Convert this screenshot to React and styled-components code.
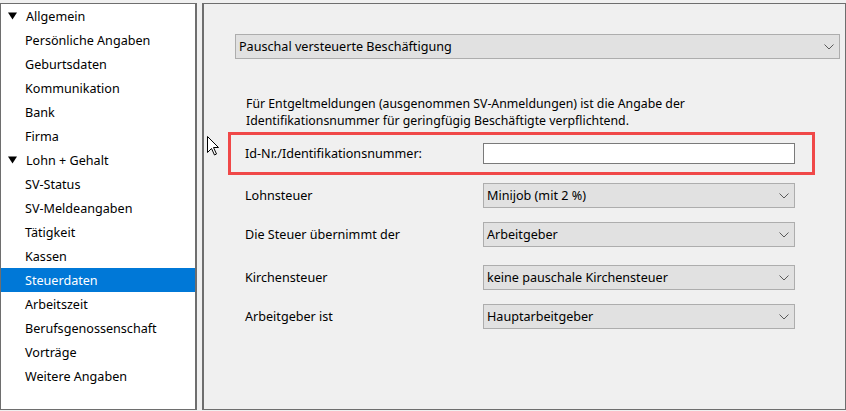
import React from "react";
import styled, { createGlobalStyle } from "styled-components";

const GlobalStyle = createGlobalStyle`
  html, body {
    margin: 0;
    padding: 0;
    background: #f0f0f0;
  }
  body {
    font-family: "Noto Sans", "Open Sans", sans-serif;
    font-size: 12.6px;
    color: #000;
  }
`;

const navItems = [
  { label: "Allgemein", group: true },
  { label: "Persönliche Angaben" },
  { label: "Geburtsdaten" },
  { label: "Kommunikation" },
  { label: "Bank" },
  { label: "Firma" },
  { label: "Lohn + Gehalt", group: true },
  { label: "SV-Status" },
  { label: "SV-Meldeangaben" },
  { label: "Tätigkeit" },
  { label: "Kassen" },
  { label: "Steuerdaten", active: true },
  { label: "Arbeitszeit" },
  { label: "Berufsgenossenschaft" },
  { label: "Vorträge" },
  { label: "Weitere Angaben" },
];

const rows = [
  { label: "Lohnsteuer", value: "Minijob (mit 2 %)", gap: 8 },
  { label: "Die Steuer übernimmt der", value: "Arbeitgeber", gap: 14 },
  { label: "Kirchensteuer", value: "keine pauschale Kirchensteuer", gap: 18 },
  { label: "Arbeitgeber ist", value: "Hauptarbeitgeber", gap: 14 },
];

const Window = styled.div`
  position: relative;
  display: flex;
  gap: 5px;
  width: 846px;
  height: 411px;
  padding-top: 3px;
  box-sizing: border-box;
`;

const Sidebar = styled.ul`
  list-style: none;
  margin: 0;
  padding: 0;
  width: 197px;
  height: 407px;
  box-sizing: border-box;
  background: #fff;
  border: 1px solid #6e6e6e;
  border-right-width: 2px;
`;

const NavItem = styled.li`
  display: flex;
  align-items: center;
  height: 24px;
  padding-left: ${(p) => (p.$group ? "7px" : "24px")};
  gap: 9px;
  background: ${(p) => (p.$active ? "#0078d7" : "transparent")};
  color: ${(p) => (p.$active ? "#fff" : "#000")};
  white-space: nowrap;
`;

const Content = styled.div`
  flex: 1;
  height: 407px;
  box-sizing: border-box;
  border: 1px solid #6e6e6e;
  border-left-width: 2px;
  padding: 30px 5px 0 31px;
`;

const Select = styled.div`
  display: flex;
  align-items: center;
  justify-content: space-between;
  width: ${(p) => p.$width || "auto"};
  height: 25px;
  box-sizing: border-box;
  padding: 0 5px 0 3px;
  background: #e1e1e1;
  border: 1px solid #adadad;
  white-space: nowrap;
`;

const Hint = styled.p`
  margin: 36px 0 3px 11px;
  line-height: 17px;
  font-size: 12.3px;
  white-space: nowrap;
`;

const Field = styled.div`
  display: flex;
  align-items: center;
  width: 587px;
  height: ${(p) => (p.$highlight ? "43px" : "25px")};
  box-sizing: border-box;
  margin-left: -7px;
  margin-top: ${(p) => p.$gap || 0}px;
  padding-left: 14px;
  border: 3px solid ${(p) => (p.$highlight ? "#f04848" : "transparent")};
  border-width: ${(p) => (p.$highlight ? "3px" : "0 3px")};
`;

const Label = styled.span`
  width: 238px;
  flex-shrink: 0;
`;

const TextInput = styled.div`
  width: 312px;
  height: 21px;
  box-sizing: border-box;
  background: #fff;
  border: 1px solid #7a7a7a;
`;

const Cursor = styled.svg`
  position: absolute;
  left: 207px;
  top: 136px;
`;

const Triangle = () => (
  <svg width="9" height="8" viewBox="0 0 9 8">
    <path d="M0 0.5 H9 L4.5 7.5 Z" fill="#000" />
  </svg>
);

const Chevron = () => (
  <svg width="10" height="6" viewBox="0 0 10 6">
    <path d="M0.5 0.5 L5 5 L9.5 0.5" fill="none" stroke="#5a5a5a" strokeWidth="1" />
  </svg>
);

export default function App() {
  return (
    <>
      <GlobalStyle />
      <Window>
        <Sidebar>
          {navItems.map((item) => (
            <NavItem key={item.label} $group={item.group} $active={item.active}>
              {item.group && <Triangle />}
              {item.label}
            </NavItem>
          ))}
        </Sidebar>
        <Content>
          <Select $width="605px">
            Pauschal versteuerte Beschäftigung
            <Chevron />
          </Select>
          <Hint>
            Für Entgeltmeldungen (ausgenommen SV-Anmeldungen) ist die Angabe der
            <br />
            Identifikationsnummer für geringfügig Beschäftigte verpflichtend.
          </Hint>
          <Field $highlight>
            <Label>Id-Nr./Identifikationsnummer:</Label>
            <TextInput />
          </Field>
          {rows.map((row) => (
            <Field key={row.label} $gap={row.gap}>
              <Label>{row.label}</Label>
              <Select $width="312px">
                {row.value}
                <Chevron />
              </Select>
            </Field>
          ))}
        </Content>
        <Cursor width="13" height="20" viewBox="0 0 13 20">
          <path
            d="M0.5 0.5 V16.5 L4.5 12.5 L7.5 19 L9.5 18 L6.5 11.5 H11.5 Z"
            fill="#fff"
            stroke="#000"
            strokeWidth="1"
            strokeLinejoin="miter"
          />
        </Cursor>
      </Window>
    </>
  );
}
